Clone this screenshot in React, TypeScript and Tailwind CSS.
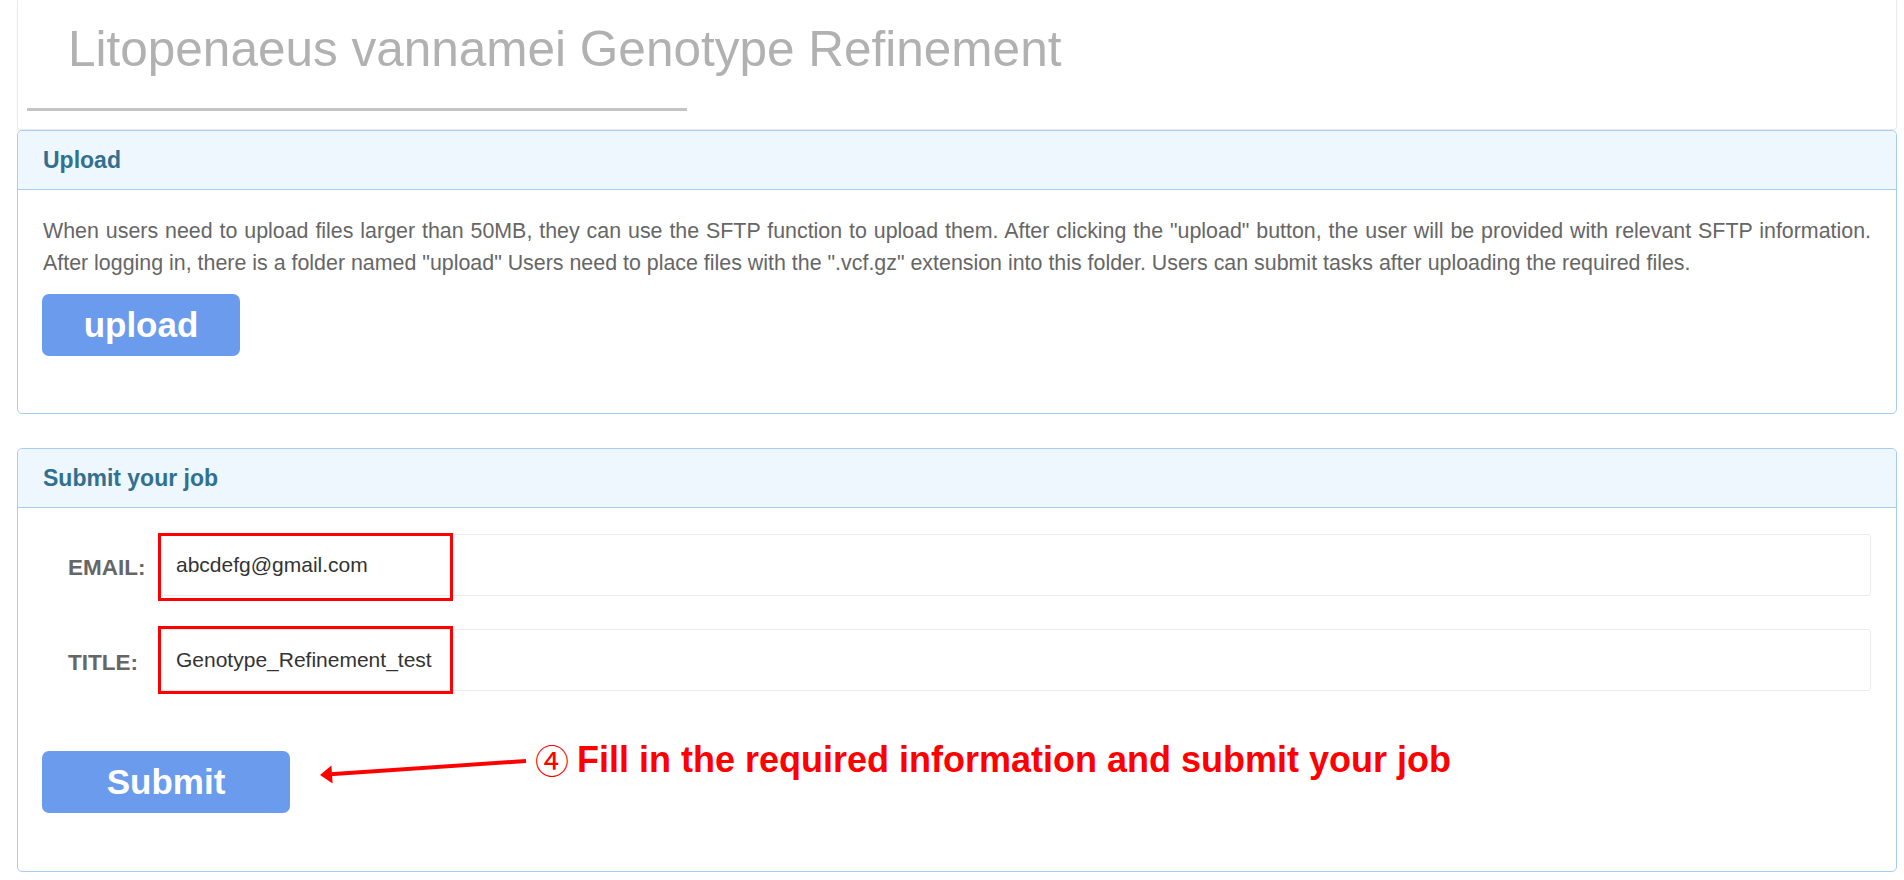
import React from "react";

const Panel = ({ title, children }: { title: string; children: React.ReactNode }) => (
  <div className="w-[1880px] rounded-[5px] border border-[#a8cdf4] bg-white">
    <div className="flex h-[59px] items-center rounded-t-[5px] border-b border-[#a8cdf4] bg-[#eef6fe] px-[25px]">
      <h3 className="text-[23px] font-bold text-[#31708f]">{title}</h3>
    </div>
    {children}
  </div>
);

const Field = ({ label, value, boxTop }: { label: string; value: string; boxTop: string }) => (
  <div className="flex items-center">
    <label className="w-[115px] pl-[25px] pt-[6px] text-[22.5px] font-bold text-[#666]">{label}</label>
    <div className="relative flex-1">
      <div className="flex h-[62px] items-center rounded-[3px] border border-[#ebebeb] px-[17px] text-[21px] text-[#333]">
        {value}
      </div>
      <div className={`pointer-events-none absolute left-0 h-[68px] w-[295px] border-[3px] border-[#ff0000] ${boxTop}`} />
    </div>
  </div>
);

export default function App() {
  return (
    <div className="h-[880px] w-[1904px] overflow-hidden bg-white font-['Liberation_Sans',Arial,sans-serif]">
      <div className="ml-[17px] w-[1880px]">
        {/* heading card */}
        <div className="h-[130px] rounded-b-[4px] border-x border-b border-[#ececec] bg-white shadow-[0_1px_2px_rgba(0,0,0,0.06)]">
          <h1 className="pl-[50px] pt-[20px] text-[49.5px] leading-[58px] font-normal text-[#b1b1b1]">
            Litopenaeus vannamei Genotype Refinement
          </h1>
          <div className="ml-[9px] mt-[30px] h-[3px] w-[660px] bg-[#c4c4c4]" />
        </div>

        <Panel title="Upload">
          <div className="px-[25px] pb-[57px] pt-[25px]">
            <p className="text-justify text-[21.4px] leading-[32px] text-[#666]">
              <span className="block [text-align-last:justify]">
                When users need to upload files larger than 50MB, they can use the SFTP function to upload them. After
                clicking the "upload" button, the user will be provided with relevant SFTP information.
              </span>
              After logging in, there is a folder named "upload" Users need to place files with the ".vcf.gz" extension
              into this folder. Users can submit tasks after uploading the required files.
            </p>
            <button className="ml-[-1px] mt-[15px] flex h-[62px] w-[198px] items-center justify-center rounded-[7px] bg-[#6b9bed] text-[35px] font-bold text-white">
              upload
            </button>
          </div>
        </Panel>

        <div className="h-[34px]" />

        <Panel title="Submit your job">
          <div className="px-[25px] pb-[58px] pt-[26px]">
            <div className="flex flex-col gap-[33px]">
              <Field label="EMAIL:" value="abcdefg@gmail.com" boxTop="top-[-1px]" />
              <Field label="TITLE:" value="Genotype_Refinement_test" boxTop="top-[-3px]" />
            </div>
            <div className="mt-[60px] flex items-start">
              <button className="ml-[-1px] flex h-[62px] w-[248px] items-center justify-center rounded-[7px] bg-[#6b9bed] text-[35px] font-bold text-white">
                Submit
              </button>
              <svg className="ml-[26px] mt-[5px]" width="212" height="30" viewBox="0 0 212 30">
                <line x1="14" y1="18.3" x2="210" y2="5" stroke="#ff0000" strokeWidth="4" />
                <polygon points="4,19 16.6,27.6 15.4,9.4" fill="#ff0000" />
              </svg>
              <div className="-mt-[11px] ml-[7px] flex items-center leading-[40px] text-[#ff0000]">
                <span className="font-['Noto_Sans_CJK_SC','DejaVu_Sans',sans-serif] text-[34px] font-normal">④</span>
                <span className="ml-[8px] text-[36px] font-bold">Fill in the required information and submit your job</span>
              </div>
            </div>
          </div>
        </Panel>
      </div>
    </div>
  );
}
